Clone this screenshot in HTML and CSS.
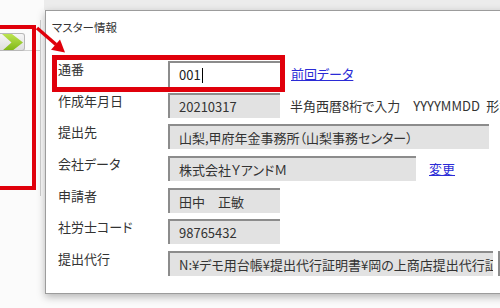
FILE: index.html
```html
<!DOCTYPE html>
<html>
	<head>
		<meta charset="UTF-8">
		<title>マスター情報</title>
		<link rel="stylesheet" href="styles.css">
	</head>
	<body>
		<div class="desk">
			<div class="topband"></div>

			<!-- 左側のツリー枠 -->
			<div class="sidepane">
				<div class="sidebar-tool">
					<span class="nextbtn">
						<svg width="25" height="17" viewBox="0 0 25 17">
							<defs>
								<linearGradient id="gr" x1="0" y1="0" x2="0" y2="1">
									<stop offset="0" stop-color="#bde552"/>
									<stop offset="1" stop-color="#7db515"/>
								</linearGradient>
							</defs>
							<polygon points="2,0 12,0 23,8.5 12,17 2,17 11.5,8.5" fill="url(#gr)"/>
						</svg>
					</span>
				</div>
			</div>

			<!-- ダイアログ -->
			<div class="dialog">
				<div class="dlg-title">マスター情報</div>
				<div class="form">
					<div class="lbl">通番</div>
					<div class="cell">
						<span class="edit">001<i class="caret"></i></span>
						<a href="javascript:;" class="link">前回データ</a>
					</div>

					<div class="lbl">作成年月日</div>
					<div class="cell">
						<span class="fld w-s">20210317</span>
						<span class="hint">半角西暦8桁で入力　YYYYMMDD&ensp;形式</span>
					</div>

					<div class="lbl">提出先</div>
					<div class="cell">
						<span class="fld w-l">山梨,甲府年金事務所（山梨事務センター）</span>
					</div>

					<div class="lbl">会社データ</div>
					<div class="cell">
						<span class="fld w-m">株式会社ＹアンドＭ</span>
						<a href="javascript:;" class="link link2">変更</a>
					</div>

					<div class="lbl">申請者</div>
					<div class="cell">
						<span class="fld w-s">田中　正敏</span>
					</div>

					<div class="lbl">社労士コード</div>
					<div class="cell">
						<span class="fld w-s">98765432</span>
					</div>

					<div class="lbl">提出代行</div>
					<div class="cell">
						<span class="fld w-xl">N:¥デモ用台帳¥提出代行証明書¥岡の上商店提出代行証明書.pdf</span>
						<span class="fld w-btn"></span>
					</div>
				</div>
			</div>

			<!-- 赤枠と矢印 -->
			<div class="mark mark-side"></div>
			<div class="mark mark-row"></div>
			<svg class="arrow" width="70" height="60" viewBox="0 0 70 60">
				<line x1="37" y1="28" x2="56" y2="44.5" stroke="#e0000b" stroke-width="3.5"/>
				<polygon points="65,52.5 51,49.8 60,39.5" fill="#e0000b"/>
			</svg>
		</div>
	</body>
</html>
```

FILE: styles.css
```css
*{
	margin: 0;
	padding: 0;
}

body{
	width: 500px;
	height: 308px;
	overflow: hidden;
	background-color: #fbfbfb;
	font-family: "Noto Sans CJK JP", "Noto Sans", sans-serif;
	color: #333;
}

.desk{
	position: relative;
	width: 500px;
	height: 308px;
}

/* 上のグレー帯 */
.topband{
	position: absolute;
	left: 44px;
	top: 0;
	right: 0;
	height: 10px;
	background-color: #ececec;
}

/* 左側のペイン */
.sidepane{
	position: absolute;
	left: 0;
	top: 20px;
	width: 40px;
	height: 176px;
	border-right: 1px solid #cfcfcf;
}
.sidebar-tool{
	height: 30px;
	border-bottom: 1px solid #cfcfcf;
	display: flex;
	align-items: flex-end;
}
.nextbtn{
	display: block;
	width: 25px;
	height: 18px;
	margin-bottom: -1px;
	box-sizing: border-box;
	border: 1px solid #b8b8b8;
	border-left: none;
	border-radius: 0 3px 3px 0;
	background: linear-gradient(#f6f6f6, #dedede);
	overflow: hidden;
}
.nextbtn svg{
	display: block;
}

/* ダイアログ */
.dialog{
	position: absolute;
	left: 45px;
	top: 10px;
	width: 480px;
	height: 284px;
	box-sizing: border-box;
	background-color: #fff;
	border: 1px solid #9c9c9c;
	box-shadow: 0 3px 8px rgba(0, 0, 0, 0.28);
}
.dlg-title{
	padding: 9px 0 0 6px;
	font-size: 11.5px;
	line-height: 15px;
	font-feature-settings: "palt";
	color: #333;
}

.form{
	display: grid;
	grid-template-columns: 110px 1fr;
	grid-auto-rows: 25px;
	row-gap: 6.7px;
	padding: 26px 0 0 12px;
}
.lbl{
	font-size: 13px;
	line-height: 16px;
	font-feature-settings: "palt";
	color: #333;
	white-space: nowrap;
}
.cell{
	display: flex;
	align-items: center;
	gap: 11px;
	white-space: nowrap;
	font-size: 13px;
	font-feature-settings: "palt";
}

.fld{
	display: block;
	height: 25px;
	box-sizing: border-box;
	padding-left: 9px;
	line-height: 23px;
	background-color: #e2e2e2;
	border-top: 2px solid #8c8c8c;
	border-left: 2px solid #8c8c8c;
	overflow: hidden;
	color: #333;
}
.w-s{ width: 112px; }
.w-m{ width: 248px; }
.w-l{ width: 321px; }
.w-xl{ width: 325px; }
.w-btn{
	width: 60px;
	margin-left: -6px;
}

.edit{
	display: block;
	width: 112px;
	height: 26px;
	box-sizing: border-box;
	padding-left: 9px;
	line-height: 24px;
	background-color: #fff;
	border-top: 2px solid #8c8c8c;
	border-left: 2px solid #8c8c8c;
	color: #222;
}
.caret{
	display: inline-block;
	width: 1px;
	height: 15px;
	margin-left: 1px;
	vertical-align: -3px;
	background-color: #000;
}

.link{
	color: #2b2bd6;
	text-decoration: underline;
}
.link2{
	margin-left: 2px;
}
.hint{
	color: #333;
	margin-left: -1px;
}

/* 赤枠 */
.mark{
	position: absolute;
	box-sizing: border-box;
	border: 4px solid #e0000b;
}
.mark-side{
	left: -10px;
	top: 25px;
	width: 46px;
	height: 165px;
}
.mark-row{
	left: 52px;
	top: 55px;
	width: 233px;
	height: 37px;
	border-width: 5px;
}
.arrow{
	position: absolute;
	left: 0;
	top: 0;
}
```
